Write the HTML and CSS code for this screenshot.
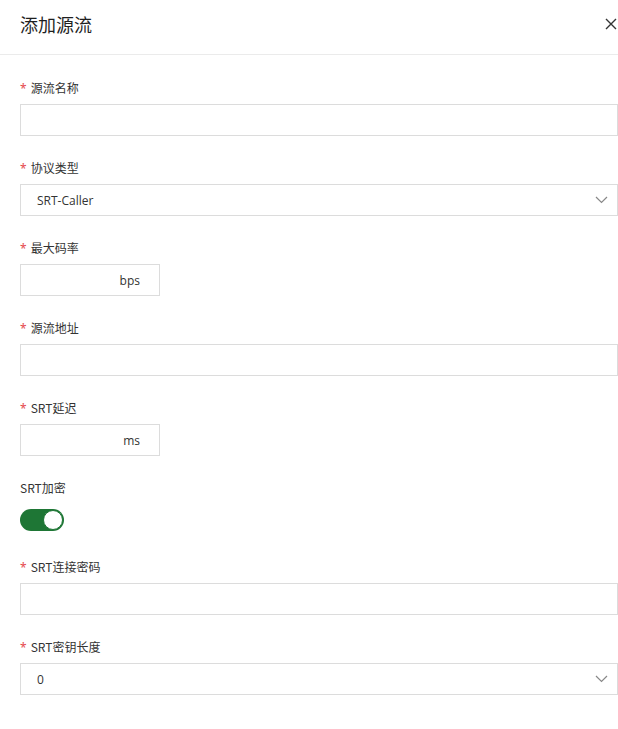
FILE: index.html
```html
<!DOCTYPE html>
<html lang="zh-CN">
<head>
<meta charset="utf-8">
<title>添加源流</title>
<link rel="stylesheet" href="styles.css">
</head>
<body>
<div class="dialog">
  <div class="header">
    <div class="title">添加源流</div>
    <svg class="close" width="12" height="12" viewBox="0 0 12 12"><path d="M1 1L11 11M11 1L1 11" stroke="#333" stroke-width="1.4" fill="none"/></svg>
  </div>
  <div class="form">
    <div class="field">
      <div class="label"><span class="req">*</span>源流名称</div>
      <div class="input"></div>
    </div>
    <div class="field">
      <div class="label"><span class="req">*</span>协议类型</div>
      <div class="input select"><span class="value">SRT-Caller</span>
        <svg class="chev" width="13" height="8" viewBox="0 0 13 8"><path d="M1 1L6.5 6.5L12 1" stroke="#888" stroke-width="1.2" fill="none"/></svg>
      </div>
    </div>
    <div class="field">
      <div class="label"><span class="req">*</span>最大码率</div>
      <div class="input short"><span class="unit">bps</span></div>
    </div>
    <div class="field">
      <div class="label"><span class="req">*</span>源流地址</div>
      <div class="input"></div>
    </div>
    <div class="field">
      <div class="label"><span class="req">*</span>SRT延迟</div>
      <div class="input short"><span class="unit">ms</span></div>
    </div>
    <div class="field">
      <div class="label">SRT加密</div>
      <div class="switch-row"><div class="switch"><div class="knob"></div></div></div>
    </div>
    <div class="field">
      <div class="label"><span class="req">*</span>SRT连接密码</div>
      <div class="input"></div>
    </div>
    <div class="field">
      <div class="label"><span class="req">*</span>SRT密钥长度</div>
      <div class="input select"><span class="value">0</span>
        <svg class="chev" width="13" height="8" viewBox="0 0 13 8"><path d="M1 1L6.5 6.5L12 1" stroke="#888" stroke-width="1.2" fill="none"/></svg>
      </div>
    </div>
  </div>
</div>
</body>
</html>
```
FILE: styles.css
```css
html, body {
  margin: 0;
  padding: 0;
  background: #fff;
}
body {
  font-family: "Noto Sans", "Noto Sans CJK SC", sans-serif;
  color: #333;
  width: 618px;
}
.header {
  height: 54px;
  border-bottom: 1px solid #ebebeb;
  display: flex;
  align-items: center;
  justify-content: space-between;
  padding-left: 20px;
  padding-right: 1px;
}
.title {
  font-family: "Noto Sans CJK SC", sans-serif;
  font-size: 18px;
  color: #1f1f1f;
  margin-top: -6px;
}
.close {
  margin-top: -6px;
}
.form {
  padding: 23px 0 0 20px;
}
.field {
  margin-bottom: 22px;
}
.label {
  height: 20px;
  line-height: 20px;
  font-size: 12px;
  color: #333;
  margin-bottom: 6px;
  font-family: "Noto Sans CJK SC", sans-serif;
}
.req {
  color: #e5484d;
  margin-right: 4px;
  font-family: "Noto Sans", sans-serif;
}
.input {
  box-sizing: border-box;
  height: 32px;
  border: 1px solid #dcdcdc;
  width: 598px;
  display: flex;
  align-items: center;
  font-size: 12px;
  color: #333;
}
.input.short {
  width: 140px;
  justify-content: flex-end;
  padding-right: 19px;
}
.select {
  justify-content: space-between;
  padding-left: 16px;
  padding-right: 9px;
}
.value {
  font-family: "Open Sans", "Noto Sans", sans-serif;
}
.unit {
  font-family: "Open Sans", "Noto Sans", sans-serif;
}
.switch-row {
  height: 31px;
  display: flex;
  align-items: center;
}
.switch {
  width: 44px;
  height: 22px;
  border-radius: 11px;
  background: #1e7635;
  position: relative;
}
.knob {
  position: absolute;
  right: 1px;
  top: 1px;
  width: 20px;
  height: 20px;
  box-sizing: border-box;
  border-radius: 50%;
  background: #fff;
  border: 1px solid #1e7635;
}
```
